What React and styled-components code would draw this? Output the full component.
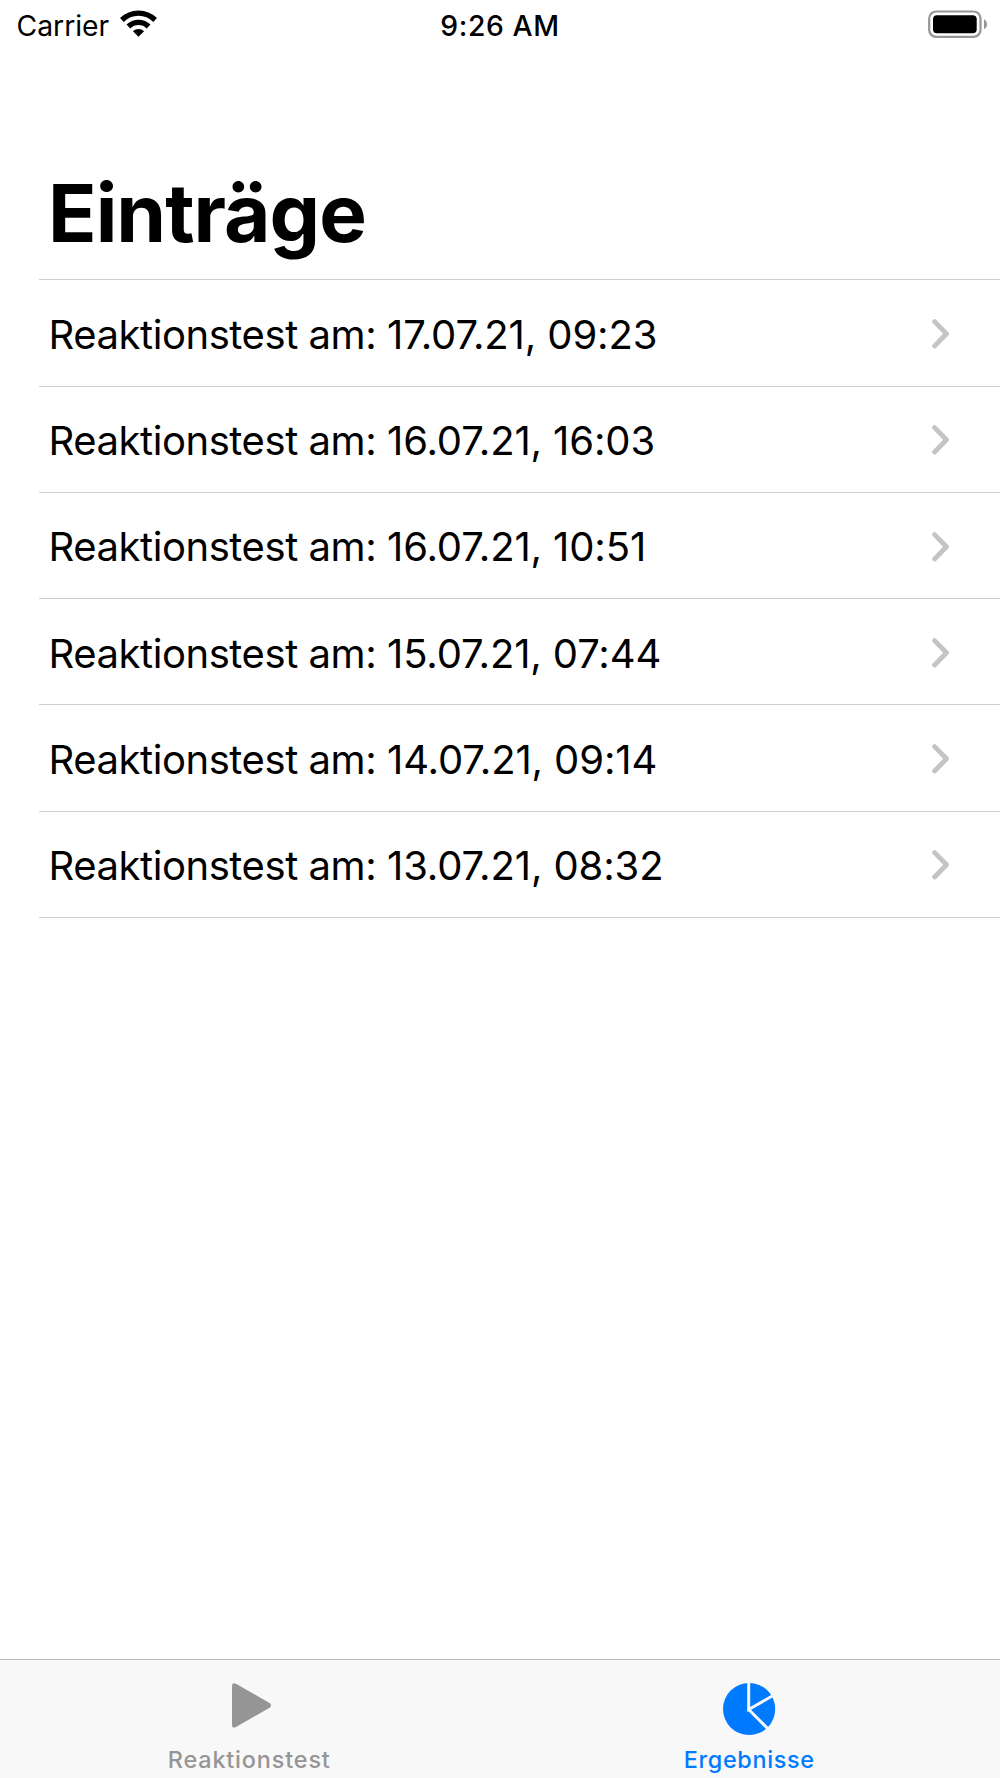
import React from "react";
import styled, { createGlobalStyle } from "styled-components";

const GlobalStyle = createGlobalStyle`
  * { box-sizing: border-box; }
  body { margin: 0; background: #fff; }
`;

const Screen = styled.div`
  width: 1000px;
  height: 1778px;
  display: flex;
  flex-direction: column;
  background: #fff;
  color: #000;
  font-family: Inter, "Liberation Sans", sans-serif;
  overflow: hidden;
`;

const StatusBar = styled.header`
  height: 48px;
  display: grid;
  grid-template-columns: 1fr auto 1fr;
  align-items: center;
  padding: 0 13px;
  font-size: 28.3px;
  line-height: 44px;
`;

const StatusLeft = styled.div`
  display: flex;
  align-items: center;
  gap: 11px;
  padding-left: 3.5px;
`;

const Carrier = styled.span`
  width: 92.5px;
  padding-top: 4px;
  white-space: nowrap;
`;

const Clock = styled.time`
  padding-top: 4px;
  font-weight: 550;
  letter-spacing: 0.6px;
  white-space: nowrap;
`;

const StatusRight = styled.div`
  display: flex;
  justify-content: flex-end;
`;

const Title = styled.h1`
  margin: 0;
  height: 231.4px;
  padding: 116px 0 0 48px;
  font-size: 80px;
  line-height: 97px;
  font-weight: 700;
  letter-spacing: -0.95px;
`;

const List = styled.ul`
  margin: 0 0 0 39px;
  padding: 0;
  list-style: none;
  flex: 1;
`;

const Row = styled.li`
  height: 106.27px;
  display: flex;
  align-items: center;
  padding: 2px 50px 0 9.5px;
  border-top: 1px solid #cfcfd0;
  font-size: 40px;
  line-height: 48px;

  &:last-child {
    height: 107.27px;
    border-bottom: 1px solid #cfcfd0;
  }
`;

const Label = styled.span`
  width: 338.5px;
  padding-top: 1.6px;
  letter-spacing: -0.44px;
  white-space: nowrap;
`;

const Stamp = styled.time`
  flex: 1;
  padding-top: 1.6px;
  letter-spacing: -0.12px;
  white-space: nowrap;
`;

const TabBar = styled.nav`
  height: 119px;
  display: grid;
  grid-template-columns: 1fr 1fr;
  border-top: 1px solid #b9b9ba;
  background: #f8f8f8;
`;

const Tab = styled.div`
  display: flex;
  flex-direction: column;
  align-items: center;
  color: ${(p) => (p.$active ? "#007aff" : "#959595")};
  padding-top: 19px;
  font-size: 23.4px;
  font-weight: 500;
  line-height: 30px;
  letter-spacing: ${(p) => p.$tracking};
`;

const TabIcon = styled.svg`
  width: 60px;
  height: 60px;
  margin-bottom: 6px;
  flex: none;
`;

const TabLabel = styled.span`
  padding-right: 1.6px;
`;

const entries = [
  "17.07.21, 09:23",
  "16.07.21, 16:03",
  "16.07.21, 10:51",
  "15.07.21, 07:44",
  "14.07.21, 09:14",
  "13.07.21, 08:32",
];

const WifiIcon = () => (
  <svg width="37" height="28" viewBox="0 0 37 28">
    <g fill="none" stroke="#000" strokeWidth="5.3">
      <path d="M1.9 10A23.5 23.5 0 0 1 35.1 10" />
      <path d="M8.4 16.5A14.3 14.3 0 0 1 28.6 16.5" />
    </g>
    <path d="M18.5 26.8L12.9 21.2A8.2 8.2 0 0 1 24.1 21.2z" />
  </svg>
);

const BatteryIcon = () => (
  <svg width="59" height="28" viewBox="0 0 59 28">
    <rect x="1.2" y="1.5" width="51.3" height="25.4" rx="7" fill="none" stroke="#969696" strokeWidth="2.2" />
    <rect x="5" y="5.2" width="43.7" height="18" rx="4" />
    <path d="M56 9.3q3 1.6 3 5t-3 5z" fill="#969696" />
  </svg>
);

const Chevron = () => (
  <svg width="18" height="30" viewBox="0 0 18 30">
    <path d="M2.6 2.6L14.5 14.8L2.6 27" fill="none" stroke="#c4c4c6" strokeWidth="4.8" strokeLinecap="round" strokeLinejoin="round" />
  </svg>
);

export default function App() {
  return (
    <Screen>
      <GlobalStyle />
      <StatusBar>
        <StatusLeft>
          <Carrier>Carrier</Carrier>
          <WifiIcon />
        </StatusLeft>
        <Clock>9:26 AM</Clock>
        <StatusRight>
          <BatteryIcon />
        </StatusRight>
      </StatusBar>
      <Title>Einträge</Title>
      <List>
        {entries.map((entry) => (
          <Row key={entry}>
            <Label>Reaktionstest am:</Label>
            <Stamp>{entry}</Stamp>
            <Chevron />
          </Row>
        ))}
      </List>
      <TabBar>
        <Tab $tracking="0.85px">
          <TabIcon viewBox="0 0 60 60">
            <path d="M12 7v38Q12 49.5 16 47.7L49.6 28.4Q52.4 26 49.6 23.6L16 4.3Q12 2.5 12 7z" fill="currentColor" transform="translate(0 .4)" />
          </TabIcon>
          <TabLabel>Reaktionstest</TabLabel>
        </Tab>
        <Tab $active $tracking="0.65px">
          <TabIcon viewBox="0 0 60 60">
            <circle cx="29.1" cy="30" r="26.1" fill="currentColor" />
            <path d="M28.7 2v28.5L54 16M28.7 30.5L49.5 51.3" fill="none" stroke="#f8f8f8" strokeWidth="3" />
          </TabIcon>
          <TabLabel>Ergebnisse</TabLabel>
        </Tab>
      </TabBar>
    </Screen>
  );
}
